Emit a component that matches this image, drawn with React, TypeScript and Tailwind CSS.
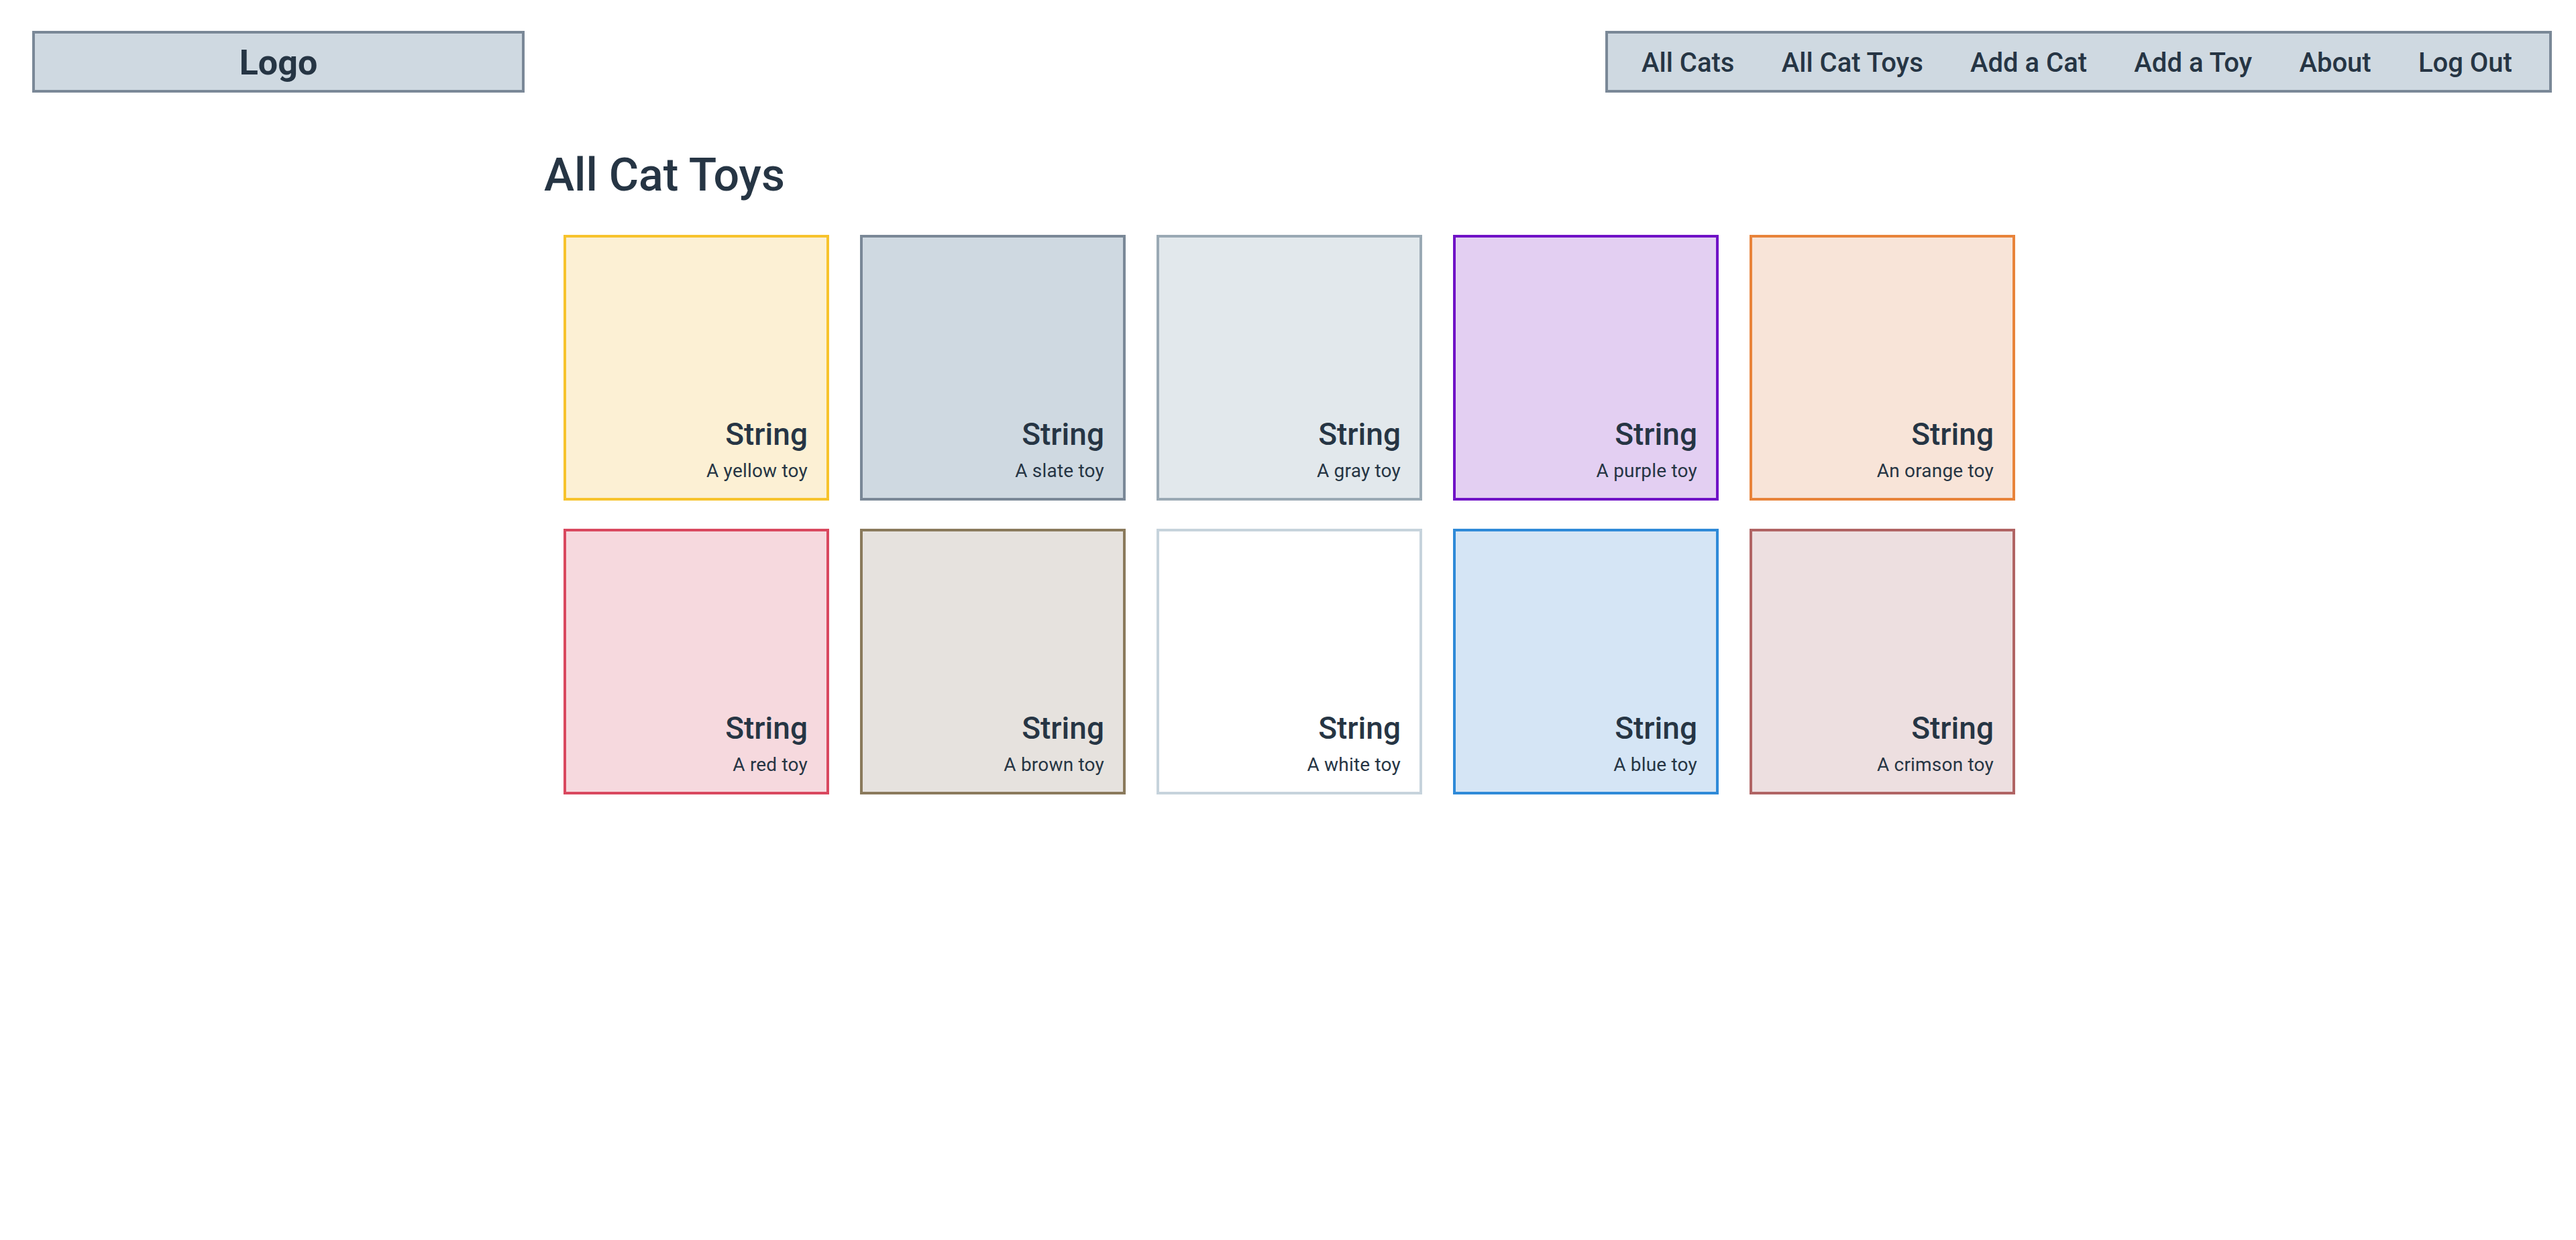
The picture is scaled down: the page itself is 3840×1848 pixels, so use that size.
import React from "react";

interface Toy {
  name: string;
  desc: string;
  cls: string;
}

const toys: Toy[] = [
  { name: "String", desc: "A yellow toy", cls: "bg-[#fcf0d4] border-[#f7c32c]" },
  { name: "String", desc: "A slate toy", cls: "bg-[#cfd9e1] border-[#7a8897]" },
  { name: "String", desc: "A gray toy", cls: "bg-[#e2e8ec] border-[#9aa9b4]" },
  { name: "String", desc: "A purple toy", cls: "bg-[#e3cff2] border-[#7012c6]" },
  { name: "String", desc: "An orange toy", cls: "bg-[#f8e4d8] border-[#e8833a]" },
  { name: "String", desc: "A red toy", cls: "bg-[#f6d9de] border-[#d9485f]" },
  { name: "String", desc: "A brown toy", cls: "bg-[#e6e2de] border-[#8a7a5c]" },
  { name: "String", desc: "A white toy", cls: "bg-white border-[#c6d3dc]" },
  { name: "String", desc: "A blue toy", cls: "bg-[#d5e5f5] border-[#2f8ad8]" },
  { name: "String", desc: "A crimson toy", cls: "bg-[#eddfe0] border-[#b06464]" },
];

const links = ["All Cats", "All Cat Toys", "Add a Cat", "Add a Toy", "About", "Log Out"];

function ToyCard({ toy }: { toy: Toy }) {
  return (
    <div
      className={`flex h-[396px] w-[396px] flex-col items-end justify-end border-4 pr-[28px] pb-[22px] ${toy.cls}`}
    >
      <p className="mb-[9px] text-[46px] leading-[56px] font-medium">{toy.name}</p>
      <p className="text-[28px] leading-[36px] tracking-[0.2px]">{toy.desc}</p>
    </div>
  );
}

export default function App() {
  return (
    <div className="min-h-screen bg-white font-['Roboto',sans-serif] text-[#263544]">
      <header className="flex items-start justify-between pt-[46px] pr-[36px] pl-[48px]">
        <div className="flex h-[92px] w-[734px] items-center justify-center border-4 border-[#7a8897] bg-[#cfd9e1] pt-[4px]">
          <span className="text-[52px] leading-none font-bold">Logo</span>
        </div>
        <nav className="flex h-[92px] w-[1411px] items-center justify-between border-4 border-[#7a8897] bg-[#cfd9e1] pt-[4px] pr-[55px] pl-[50px]">
          {links.map((l) => (
            <a key={l} href="#" className="text-[40px] leading-none font-medium">
              {l}
            </a>
          ))}
        </nav>
      </header>

      <main className="pt-[82px] pl-[811px]">
        <h1 className="text-[68px] leading-[82px] font-medium">All Cat Toys</h1>
        <div className="mt-[48px] ml-[29px] grid grid-cols-[repeat(5,396px)] gap-x-[46px] gap-y-[42px]">
          {toys.map((t) => (
            <ToyCard key={t.desc} toy={t} />
          ))}
        </div>
      </main>
    </div>
  );
}
